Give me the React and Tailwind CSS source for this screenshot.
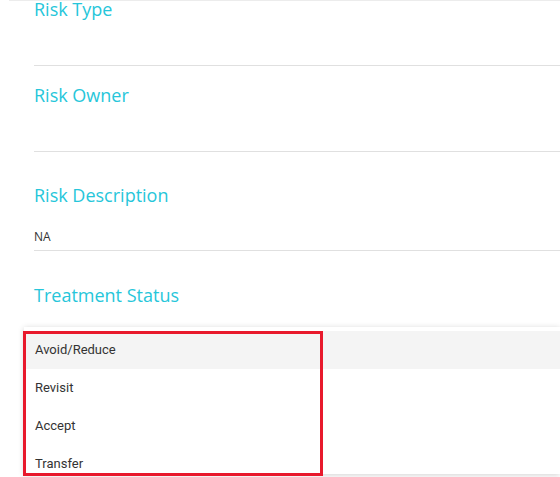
import React from 'react';

const labelCls = "text-[18px] leading-[18px] text-[#26c6da] font-['Open_Sans',sans-serif]";

const options = ['Avoid/Reduce', 'Revisit', 'Accept', 'Transfer'];

const App = () => {
  return (
    <div className="relative w-[560px] h-[477px] overflow-hidden bg-white">
      {/* top edge of the card */}
      <div className="ml-[9px] h-px bg-[#ececec]" />

      <div className="ml-[34px]">
        {/* risk type */}
        <div className="-mt-px h-[66px] border-b border-[#e0e0e0]">
          <div className={labelCls}>Risk Type</div>
        </div>

        {/* risk owner */}
        <div className="mt-[20px] h-[66px] border-b border-[#e0e0e0]">
          <div className={labelCls}>Risk Owner</div>
        </div>

        {/* risk description */}
        <div className="mt-[34px] border-b border-[#e0e0e0] pb-[5px]">
          <div className={labelCls}>Risk Description</div>
          <div className="mt-[25px] text-[12px] leading-4 text-[#333] font-['Open_Sans',sans-serif]">NA</div>
        </div>

        {/* treatment status */}
        <div className="mt-[35px]">
          <div className={labelCls}>Treatment Status</div>
        </div>
      </div>

      {/* dropdown menu */}
      <div className="mt-[23px] ml-[24px] h-[147px] overflow-hidden bg-white pt-1 shadow-[0_1px_6px_rgba(0,0,0,0.18)] font-['Roboto',sans-serif]">
        {options.map((o, i) => (
          <div
            key={o}
            className={
              'h-[38px] flex items-center pl-[11px] text-[13px] text-[#333] ' +
              (i === 0 ? 'bg-[#f4f4f4]' : 'bg-white')
            }
          >
            {o}
          </div>
        ))}
      </div>

      {/* red highlight box */}
      <div className="absolute left-[23px] top-[331px] w-[300px] h-[145px] border-[3px] border-[#e8192c]" />
    </div>
  );
};

export default App;
